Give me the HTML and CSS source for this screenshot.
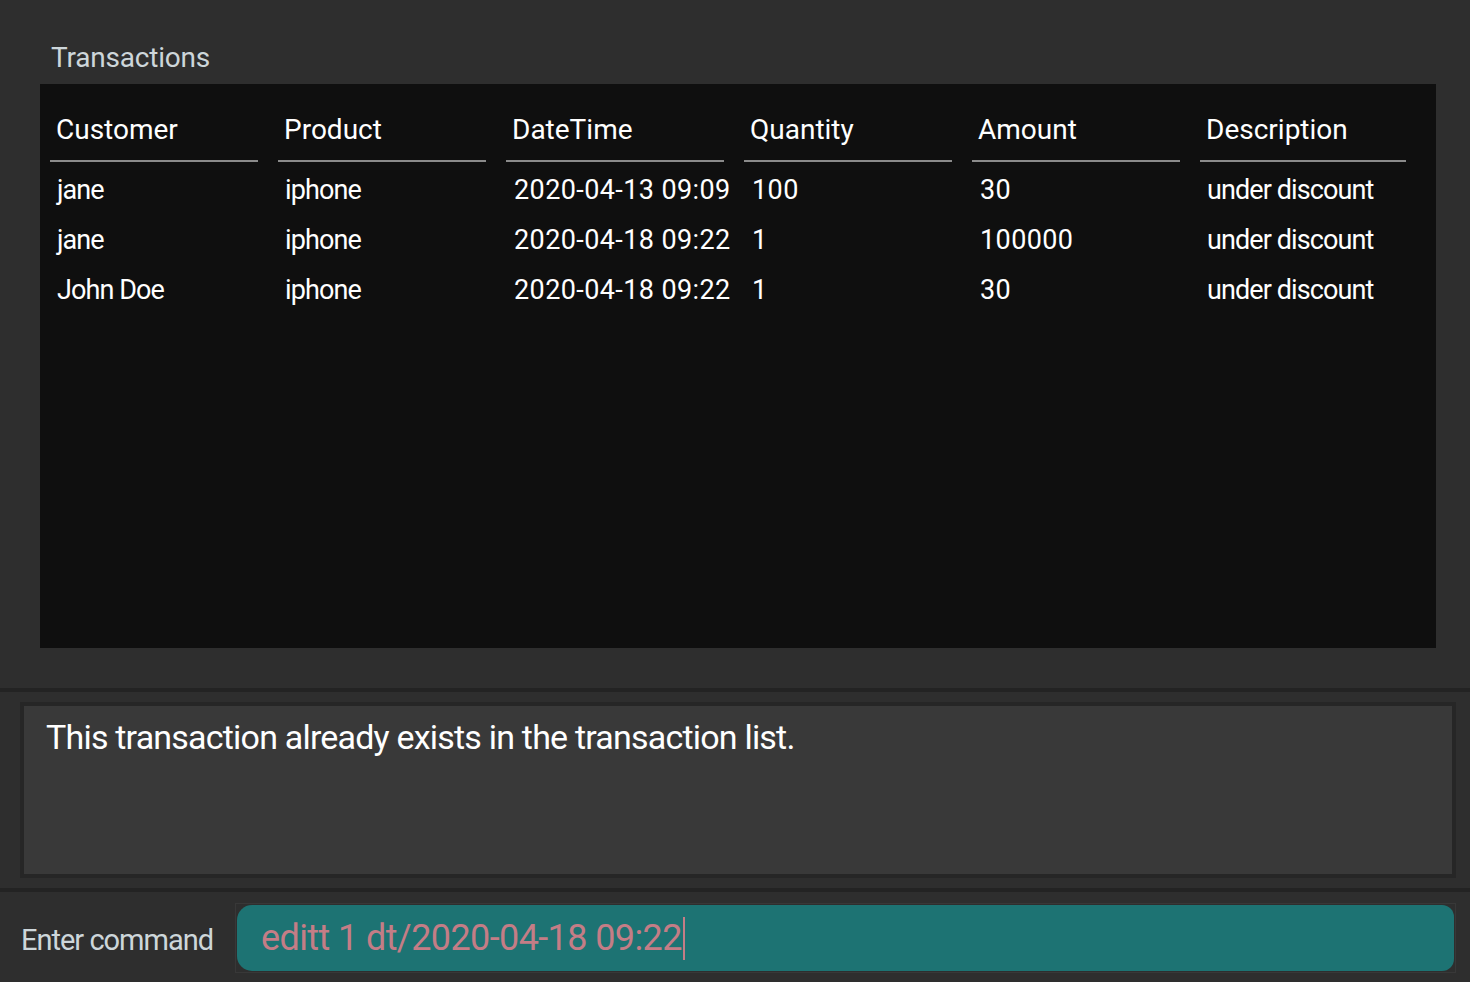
FILE: index.html
```html
<!DOCTYPE html>
<html lang="en">
<head>
<meta charset="utf-8">
<title>Transactions</title>
<link rel="stylesheet" href="styles.css">
</head>
<body>
<div class="app">
  <section class="list-panel">
    <div class="list-title">Transactions</div>
    <div class="table">
      <div class="th">Customer</div>
      <div class="th">Product</div>
      <div class="th">DateTime</div>
      <div class="th">Quantity</div>
      <div class="th">Amount</div>
      <div class="th">Description</div>

      <div class="td txt first-row">jane</div>
      <div class="td txt first-row">iphone</div>
      <div class="td num first-row">2020-04-13 09:09</div>
      <div class="td num first-row">100</div>
      <div class="td num first-row">30</div>
      <div class="td txt first-row">under discount</div>

      <div class="td txt">jane</div>
      <div class="td txt">iphone</div>
      <div class="td num">2020-04-18 09:22</div>
      <div class="td num">1</div>
      <div class="td num">100000</div>
      <div class="td txt">under discount</div>

      <div class="td txt">John Doe</div>
      <div class="td txt">iphone</div>
      <div class="td num">2020-04-18 09:22</div>
      <div class="td num">1</div>
      <div class="td num">30</div>
      <div class="td txt">under discount</div>
    </div>
  </section>
  <div class="separator"></div>
  <section class="result-panel">
    <div class="result-box">This transaction already exists in the transaction list.</div>
  </section>
  <div class="separator"></div>
  <section class="command-panel">
    <div class="command-label">Enter command</div>
    <div class="command-frame">
      <div class="command-input"><span class="command-text">editt 1 dt/2020-04-18 09:22</span><span class="caret"></span></div>
    </div>
  </section>
</div>
</body>
</html>
```
FILE: styles.css
```css
html, body {
  margin: 0;
  padding: 0;
}
body {
  background: #2e2e2e;
  font-family: Roboto, "Liberation Sans", sans-serif;
  color: #ffffff;
}
.app {
  width: 1470px;
  height: 982px;
  display: flex;
  flex-direction: column;
}
.list-panel {
  flex: 1;
  display: flex;
  flex-direction: column;
  padding: 41px 34px 40px 40px;
  min-height: 0;
}
.list-title {
  font-size: 28px;
  line-height: 34px;
  height: 34px;
  color: #cdd6da;
  padding-left: 11px;
  margin-bottom: 9px;
  letter-spacing: -0.2px;
}
.table {
  flex: 1;
  background: #0f0f0f;
  display: grid;
  grid-template-columns: 228px 228px 238px 228px 228px 226px;
  grid-auto-rows: max-content;
  align-content: start;
  padding-top: 29px;
}
.th {
  margin: 0 10px;
  padding: 0 0 13px 6px;
  font-size: 28px;
  line-height: 34px;
  letter-spacing: 0;
  border-bottom: 2px solid #8b8b8b;
  white-space: nowrap;
}
.td {
  margin: 0 10px;
  padding-left: 7px;
  font-size: 27px;
  line-height: 50px;
  white-space: nowrap;
}
.td.txt {
  letter-spacing: -0.9px;
}
.td.num {
  letter-spacing: 0.4px;
  padding-left: 8px;
}
.td.first-row {
  margin-top: 3px;
}
.separator {
  height: 4px;
  background: #232323;
  flex: none;
}
.result-panel {
  height: 196px;
  flex: none;
  padding: 10px 14px 10px 20px;
  box-sizing: border-box;
  display: flex;
}
.result-box {
  flex: 1;
  background: #393939;
  border: 4px solid #262626;
  padding: 11px 22px;
  font-size: 34px;
  line-height: 40px;
  letter-spacing: -0.8px;
  color: #ffffff;
}
.command-panel {
  height: 90px;
  flex: none;
  box-sizing: border-box;
  padding: 11px 14px 9px 21px;
  display: flex;
  align-items: stretch;
}
.command-label {
  width: 214px;
  flex: none;
  display: flex;
  align-items: center;
  padding-top: 4px;
  font-size: 29px;
  letter-spacing: -1px;
  color: #cdd6da;
}
.command-frame {
  flex: 1;
  border: 1px solid #383838;
  padding: 1px;
  display: flex;
}
.command-input {
  flex: 1;
  background: #1d7373;
  border-radius: 15px 12px 12px 15px;
  display: flex;
  align-items: center;
  padding-left: 24px;
  font-size: 36px;
  letter-spacing: -0.6px;
  color: #c47d86;
}
.command-text {
  line-height: 44px;
}
.caret {
  display: inline-block;
  width: 2px;
  height: 43px;
  background: #c47d86;
  margin-left: 1px;
}
```
